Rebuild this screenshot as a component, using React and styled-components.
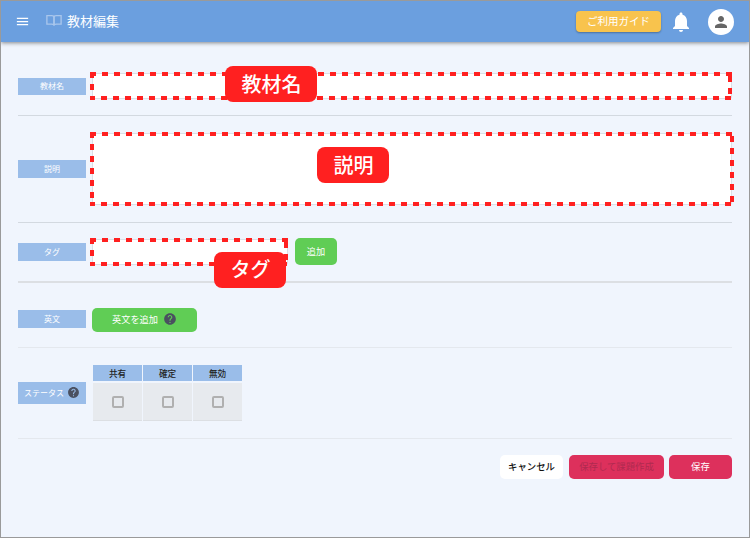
import React from 'react';
import styled, { createGlobalStyle } from 'styled-components';
import { MdMenu, MdNotifications, MdPerson, MdHelp } from 'react-icons/md';

const GlobalStyle = createGlobalStyle`
  html, body { margin: 0; padding: 0; background: #f0f5fd; }
  body { font-family: "Noto Sans CJK JP", "Noto Sans", sans-serif; }
  * { box-sizing: border-box; }
`;

const Page = styled.div`
  width: 750px;
  height: 538px;
  border: 1px solid #9a9a9a;
  background: #f0f5fd;
  overflow: hidden;
`;

const Header = styled.header`
  height: 41px;
  background: #6b9fdf;
  box-shadow: 0 1px 4px rgba(0, 0, 0, 0.45);
  display: flex;
  align-items: center;
  padding: 0 15px 0 14px;
  color: #fff;
`;

const BookIcon = styled.svg`
  margin-left: 16px;
  margin-top: -2px;
`;

const Title = styled.h1`
  margin: -2px 0 0 5px;
  font-size: 13px;
  font-weight: 400;
`;

const GuideButton = styled.button`
  margin-left: auto;
  width: 85px;
  height: 21px;
  padding: 0 0 2px;
  border: 0;
  border-radius: 4px;
  background: #f8c34d;
  box-shadow: 0 1px 2px rgba(0, 0, 0, 0.3);
  color: #fff;
  font: inherit;
  font-size: 10.5px;
`;

const Bell = styled(MdNotifications)`
  margin-left: 8px;
  font-size: 24px;
`;

const Avatar = styled.div`
  margin-left: 15px;
  width: 26px;
  height: 26px;
  border-radius: 50%;
  background: #fff;
  color: #666;
  display: flex;
  align-items: center;
  justify-content: center;
  font-size: 18px;
`;

const Content = styled.main`
  padding: 15px 17px 0;
`;

const Row = styled.section`
  display: flex;
  align-items: center;
  gap: 6px;
  padding: ${p => p.$pad};
  border-bottom: ${p => p.$rule || '1px solid #d3d9e0'};
`;

const Label = styled.div`
  flex: none;
  width: 68px;
  height: ${p => p.$h}px;
  margin: ${p => p.$shift || 0};
  padding-bottom: 2px;
  background: #9abde9;
  color: #fff;
  font-size: 8px;
  display: flex;
  align-items: center;
  justify-content: center;
  gap: 3px;
`;

const Field = styled.div`
  position: relative;
  flex: ${p => p.$width ? 'none' : 1};
  width: ${p => p.$width || 'auto'};
  height: ${p => p.$height}px;
  background: #fff;
  border: 1px solid #dcdfe6;
  border-radius: 2px;
`;

// annotation frame: 6px dash, 6px gap, 4px thick
const Dashed = styled.div`
  position: absolute;
  inset: -2px ${p => p.$right}px -2px -3px;
  background:
    linear-gradient(90deg, #ff2020 6px, transparent 6px) 0 0 / 12px 4px repeat-x,
    linear-gradient(90deg, #ff2020 6px, transparent 6px) -1px 100% / 12px 4px repeat-x,
    linear-gradient(180deg, #ff2020 6px, transparent 6px) 0 0 / 4px 12px repeat-y,
    linear-gradient(180deg, #ff2020 6px, transparent 6px) 100% 4px / 4px 12px repeat-y;
`;

const Callout = styled.div`
  position: absolute;
  z-index: 2;
  left: ${p => p.$left}px;
  top: ${p => p.$top}px;
  width: ${p => p.$w}px;
  height: 36px;
  padding: 0 0 2px 1px;
  border-radius: 8px;
  background: #ff2020;
  color: #fff;
  font-size: 20px;
  font-weight: 500;
  display: flex;
  align-items: center;
  justify-content: center;
`;

const GreenButton = styled.button`
  width: ${p => p.$w}px;
  height: ${p => p.$h}px;
  margin-left: ${p => p.$gap || 0}px;
  padding: 0 0 2px;
  border: 0;
  border-radius: 5px;
  background: #60cd55;
  color: #fff;
  font: inherit;
  font-size: 9.2px;
  display: flex;
  align-items: center;
  justify-content: center;
  gap: 5px;
`;

const HelpIcon = styled(MdHelp)`
  font-size: ${p => p.$size}px;
  color: #4a5060;
`;

const StatusTable = styled.div`
  margin-left: 1px;
  display: grid;
  grid-template-columns: repeat(3, 49px);
  grid-template-rows: 16px 38px;
  column-gap: 1px;
  row-gap: 2px;
`;

const StatusHead = styled.div`
  background: #9abde9;
  color: #222;
  font-size: 8.6px;
  font-weight: 500;
  display: flex;
  align-items: center;
  justify-content: center;
`;

const StatusCell = styled.div`
  background: #e7eaee;
  border-bottom: 1px solid #dcdfe3;
  display: flex;
  align-items: center;
  justify-content: center;
`;

const Checkbox = styled.span`
  width: 12px;
  height: 12px;
  border: 2px solid #b0b0b0;
  border-radius: 2px;
`;

const Footer = styled.footer`
  display: flex;
  justify-content: flex-end;
  gap: 5px;
  padding-top: 16px;
`;

const FootButton = styled.button`
  width: ${p => p.$w}px;
  height: 24px;
  margin-right: ${p => p.$after || 0}px;
  padding: 0 0 2px;
  border: 0;
  border-radius: 5px;
  background: ${p => p.$bg};
  color: ${p => p.$color};
  font: inherit;
  font-size: 9.4px;
  font-weight: ${p => p.$weight || 400};
`;

const statusColumns = ['共有', '確定', '無効'];

export default function App() {
  return (
    <Page>
      <GlobalStyle />
      <Header>
        <MdMenu size={15} />
        <BookIcon width="16" height="13" viewBox="0 0 18 14" fill="none" stroke="#a9c6ec" strokeWidth="1.5">
          <path d="M1 1.5h5.5c1.4 0 2.5.6 2.5 2v9c0-1-1-1.5-2.5-1.5H1z" />
          <path d="M17 1.5h-5.5c-1.4 0-2.5.6-2.5 2v9c0-1 1-1.5 2.5-1.5H17z" />
        </BookIcon>
        <Title>教材編集</Title>
        <GuideButton>ご利用ガイド</GuideButton>
        <Bell />
        <Avatar><MdPerson /></Avatar>
      </Header>
      <Content>
        <Row $pad="16px 0 16px">
          <Label $h={17}>教材名</Label>
          <Field $height={26}>
            <Dashed $right={-1} />
            <Callout $left={132} $top={-8} $w={92}>教材名</Callout>
          </Field>
        </Row>
        <Row $pad="17px 0">
          <Label $h={18}>説明</Label>
          <Field $height={72}>
            <Dashed $right={-3} />
            <Callout $left={224} $top={13} $w={72}>説明</Callout>
          </Field>
        </Row>
        <Row $pad="15px 0 16px" $rule="2px solid #dcdfe3">
          <Label $h={18} $shift="1px 0 0">タグ</Label>
          <Field $height={26} $width="196px">
            <Dashed $right={-1} />
            <Callout $left={121} $top={12} $w={72}>タグ</Callout>
          </Field>
          <GreenButton $w={42} $h={27} $gap={1}>追加</GreenButton>
        </Row>
        <Row $pad="25px 0 15px" $rule="1px solid #e4e8ee">
          <Label $h={18} $shift="0 0 2px">英文</Label>
          <GreenButton $w={105} $h={24}>英文を追加 <HelpIcon $size={14} /></GreenButton>
        </Row>
        <Row $pad="17px 0" $rule="1px solid #e4e8ee">
          <Label $h={22}>ステータス <HelpIcon $size={13} /></Label>
          <StatusTable>
            {statusColumns.map(name => <StatusHead key={name}>{name}</StatusHead>)}
            {statusColumns.map(name => <StatusCell key={name}><Checkbox /></StatusCell>)}
          </StatusTable>
        </Row>
        <Footer>
          <FootButton $w={63} $after={1} $bg="#fff" $color="#111" $weight={500}>キャンセル</FootButton>
          <FootButton $w={95} $bg="#dd305c" $color="#b02a50">保存して課題作成</FootButton>
          <FootButton $w={63} $bg="#dd305c" $color="#fff">保存</FootButton>
        </Footer>
      </Content>
    </Page>
  );
}
